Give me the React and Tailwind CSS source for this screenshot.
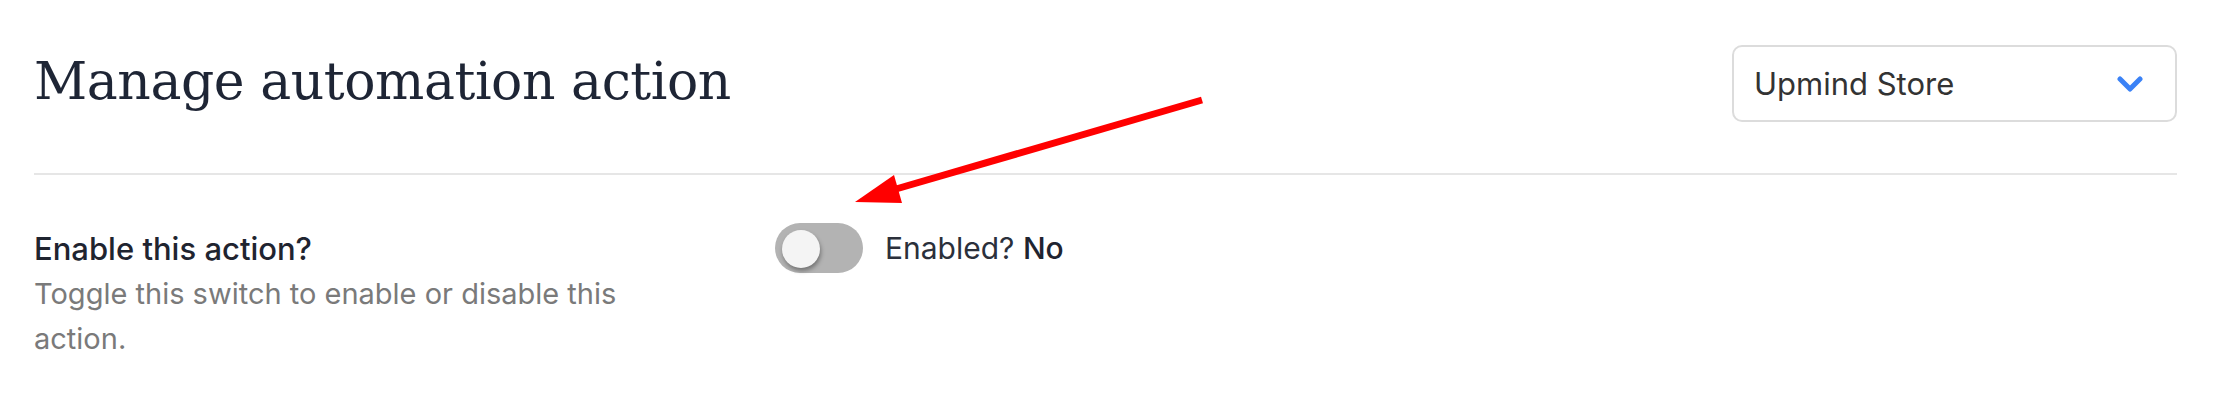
import React, { useState } from "react";

function StoreSelect() {
  return (
    <button className="flex h-[77px] w-[445px] shrink-0 items-center justify-between rounded-[10px] border-2 border-[#dcdcdc] bg-white pl-[20px] pr-[32px] text-[31px] leading-none text-[#333333]">
      <span>Upmind Store</span>
      <svg width="26" height="16" viewBox="0 0 26 16" fill="none">
        <polyline
          points="3,3 13,13 23,3"
          stroke="#3b82f6"
          strokeWidth="5"
          strokeLinecap="round"
          strokeLinejoin="round"
        />
      </svg>
    </button>
  );
}

function Toggle({ on, onChange }) {
  return (
    <button
      onClick={() => onChange(!on)}
      className={
        "flex h-[50px] w-[88px] shrink-0 items-center rounded-full px-[7px] " +
        (on ? "justify-end bg-[#22c55e]" : "justify-start bg-[#b3b3b3]")
      }
    >
      <span className="mt-[2px] block h-[38px] w-[38px] rounded-full bg-[#f4f4f4] shadow-[1px_3px_4px_rgba(0,0,0,0.35)]" />
    </button>
  );
}

export default function App() {
  const [enabled, setEnabled] = useState(false);

  return (
    <div className="relative h-[402px] w-full overflow-hidden bg-white pl-[34px] pr-[57px] font-['Inter',sans-serif]">
      <div className="flex items-center justify-between pt-[45px] pb-[51px]">
        <h1 className="-mt-[5px] font-['DejaVu_Serif',serif] text-[52px] font-normal leading-none tracking-[-0.45px] text-[#1e2535]">
          Manage automation action
        </h1>
        <StoreSelect />
      </div>

      <div className="h-[2px] bg-[#e6e6e6]" />

      <div className="flex items-start pt-[48px]">
        <div className="w-[741px] shrink-0 pt-[3px]">
          <p className="text-[31px] font-medium leading-[45px] text-[#1f2430]">Enable this action?</p>
          <p className="max-w-[620px] text-[29px] leading-[45px] text-[#7a7a7a]">
            Toggle this switch to enable or disable this action.
          </p>
        </div>
        <div className="flex items-center gap-[22px]">
          <Toggle on={enabled} onChange={setEnabled} />
          <span className="text-[30px] leading-[40px] text-[#2b303b]">
            Enabled? <span className="font-medium text-[#1f2430]">{enabled ? "Yes" : "No"}</span>
          </span>
        </div>
      </div>

      {/* annotation arrow */}
      <svg
        className="pointer-events-none absolute inset-0 h-full w-full"
        viewBox="0 0 2234 402"
        preserveAspectRatio="none"
      >
        <line x1="1202" y1="100" x2="896" y2="189" stroke="#ff0000" strokeWidth="7" />
        <polygon points="855,202 894,175 902,203" fill="#ff0000" />
      </svg>
    </div>
  );
}
